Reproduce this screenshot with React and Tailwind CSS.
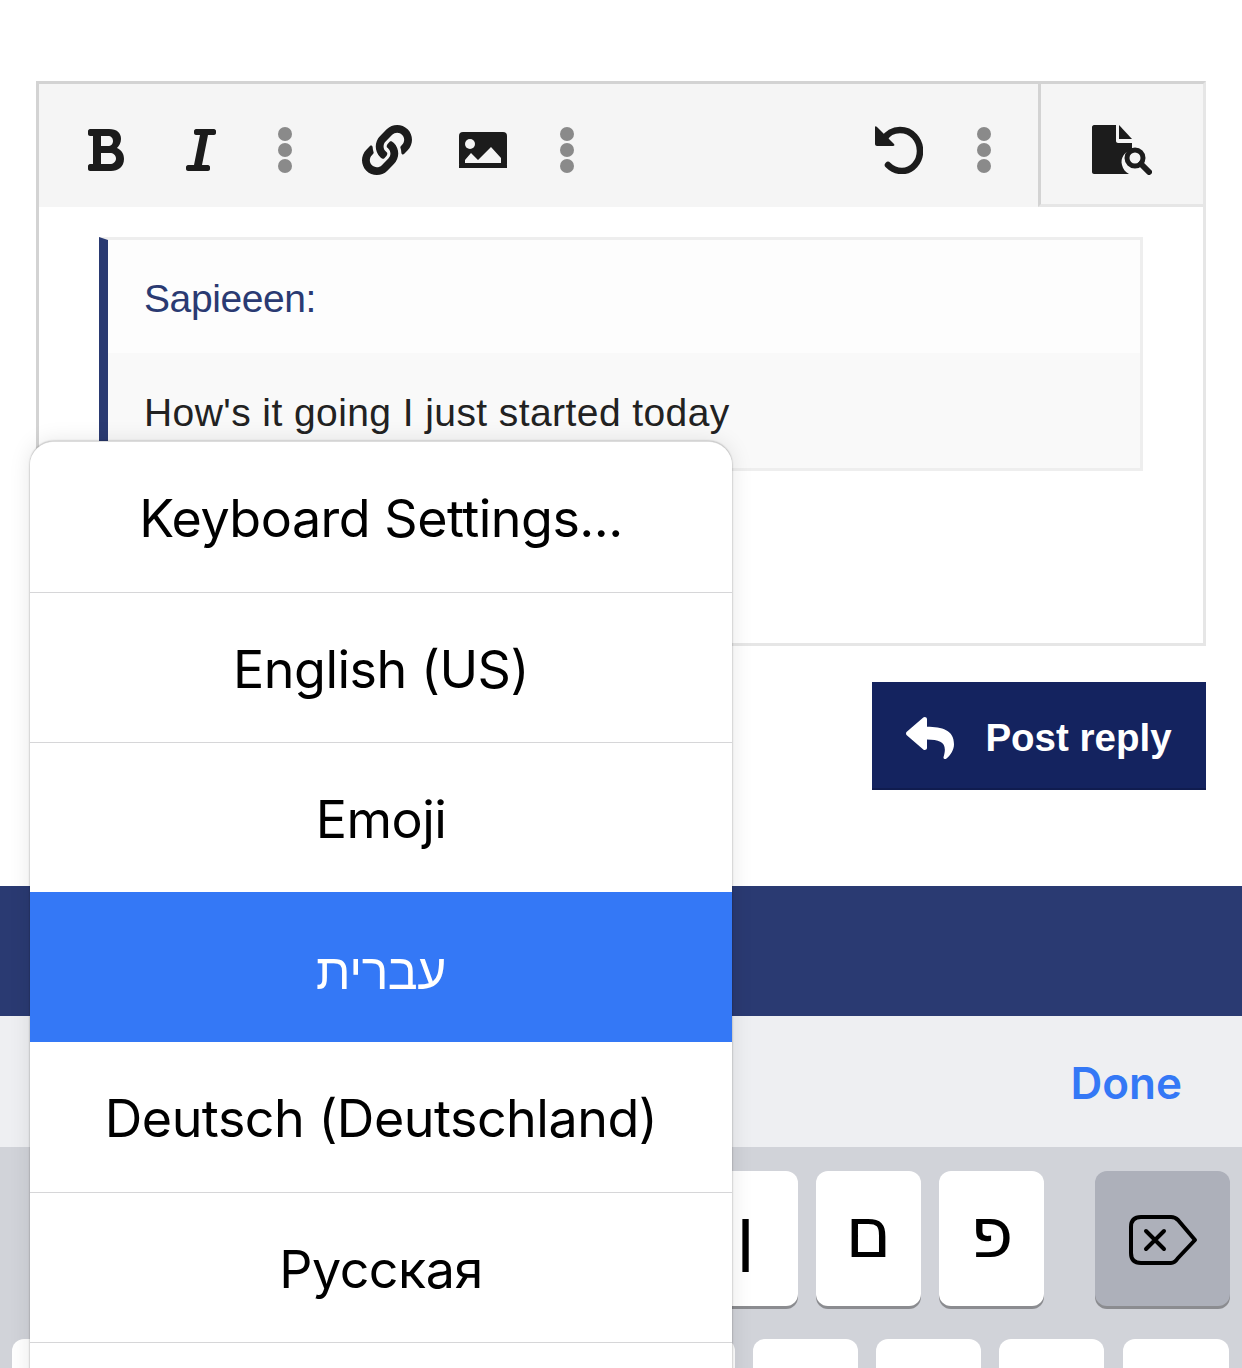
import React from "react";
import { FaLink, FaReply } from "react-icons/fa";

const Dots = ({ className = "" }) => (
  <div className={`flex flex-col items-center gap-[2px] ${className}`}>
    <span className="w-[14px] h-[14px] rounded-full bg-[#8a8a8a]" />
    <span className="w-[14px] h-[14px] rounded-full bg-[#8a8a8a]" />
    <span className="w-[14px] h-[14px] rounded-full bg-[#8a8a8a]" />
  </div>
);

const BoldIcon = () => (
  <svg width="36" height="42" viewBox="0 0 36 42" fill="#1c1c1c" fillRule="evenodd">
    <path d="M2 0h19c8 0 12 4 12 10 0 4-2 7-4 9 4 2 7 5 7 11 0 8-6 12-13 12H2c-1 0-2-1-2-2v-3c0-1 1-2 2-2h3V7H2C1 7 0 6 0 5V2c0-1 1-2 2-2zm11 7v10h7c3 0 5-2 5-5s-2-5-5-5h-7zm0 17v11h9c3 0 6-2 6-5.500S25 24 22 24h-9z" />
  </svg>
);
const ItalicIcon = () => (
  <svg width="30" height="42" viewBox="0 0 30 42" fill="#1c1c1c">
    <path d="M10 0h18c1 0 2 1 2 2v2c0 1-1 2-2 2h-6l-6 30h6c1 0 2 1 2 2v2c0 1-1 2-2 2H2c-1 0-2-1-2-2v-2c0-1 1-2 2-2h6l6-30h-4C9 6 8 5 8 4V2c0-1 1-2 2-2z" />
  </svg>
);
const ImageIcon = () => (
  <svg width="48" height="36" viewBox="0 0 48 36">
    <rect width="48" height="36" rx="4" fill="#1c1c1c" />
    <circle cx="11" cy="12" r="5" fill="#f5f5f5" />
    <path d="M6 34v-3h0V28l6-7 7 7 13-13 10 11v5H6z" fill="#f5f5f5" />
    <rect y="33" width="48" height="3" fill="#1c1c1c" />
  </svg>
);
const UndoIcon = () => (
  <svg width="48" height="48" viewBox="0 0 48 48" fill="none">
    <path d="M13 39c4 4 9 6 14 6 10 0 18-9 18-20S37 4 25 4C18 4 12 8 9 13" stroke="#1c1c1c" strokeWidth="6.500" strokeLinecap="round" />
    <path d="M0 1c0-1 1-1 2 0l17 17c1 1 0 2-1 2H2c-1 0-2-1-2-2V1z" fill="#1c1c1c" />
  </svg>
);
const FileSearchIcon = () => (
  <svg width="60" height="50" viewBox="0 0 60 50">
    <path d="M2 0h22v16c0 1 1 2 2 2h14v7c-7 1-12 8-10 15 1 4 3 7 7 9H2c-1 0-2-1-2-2V2C0 1 1 0 2 0z" fill="#1c1c1c" />
    <path d="M27 0l13 14H27z" fill="#1c1c1c" />
    <circle cx="43" cy="33" r="8" fill="none" stroke="#1c1c1c" strokeWidth="5" />
    <path d="M49 39l8 8" stroke="#1c1c1c" strokeWidth="6" strokeLinecap="round" />
  </svg>
);
const BackspaceIcon = () => (
  <svg width="70" height="50" viewBox="0 0 70 50" fill="none" stroke="#000" strokeWidth="4" strokeLinejoin="round" strokeLinecap="round">
    <path d="M13 2h30c3 0 5 1 7 3l17 20-17 18c-2 3-4 5-7 5H13C6 48 3 44 3 38V12C3 6 6 2 13 2z" />
    <path d="M18 16l18 18M36 16L18 34" />
  </svg>
);

const Key = ({ children, className = "w-[105px]" }) => (
  <div className={`h-[135px] rounded-[12px] bg-white shadow-[0_3px_0_#8b8c90] flex items-center justify-center text-black text-[70px] leading-none font-['DejaVu_Sans',sans-serif] pb-[12px] ${className}`}>
    {children}
  </div>
);

const MenuRow = ({ children, active, line }) => (
  <div className={`h-[150px] flex items-center justify-center leading-none font-['Inter','Liberation_Sans',sans-serif] tracking-[-0.5px] ${active ? "bg-[#3478f6] text-white text-[50px] pt-[8px]" : "bg-white text-black text-[52px] pt-[4px]"} ${line ? "border-t-[1px] border-[#d6d6d8]" : ""}`}>
    {children}
  </div>
);

export default function App() {
  return (
    <div className="relative w-[1242px] h-[1368px] overflow-hidden bg-white font-['Liberation_Sans',Arial,sans-serif]">
      <div className="pt-[81px] px-[36px]">
        <div className="w-[1170px] h-[565px] border-[3px] border-t-[#d3d3d3] border-l-[#d3d3d3] border-r-[#e6e6e6] border-b-[#e6e6e6]">
          <div className="h-[123px] bg-[#f5f5f5] flex">
            <div className="flex-1 flex items-center pl-[49px] pt-[8px]">
              <BoldIcon />
              <div className="ml-[62px]"><ItalicIcon /></div>
              <Dots className="ml-[62px]" />
              <div className="ml-[70px]"><FaLink size={50} color="#1c1c1c" /></div>
              <div className="ml-[47px]"><ImageIcon /></div>
              <Dots className="ml-[53px]" />
              <div className="ml-auto mr-[47px] flex items-center">
                <UndoIcon />
                <Dots className="ml-[54px]" />
              </div>
            </div>
            <div className="w-[165px] shrink-0 border-l-[3px] border-l-[#d3d3d3] border-b-[3px] border-b-[#e6e6e6] flex items-center justify-center pt-[12px]">
              <FileSearchIcon />
            </div>
          </div>
          <div className="pt-[30px] pl-[60px]">
            <div className="w-[1044px] h-[234px] border-l-[9px] border-l-[#2a3a72] border-t-[3px] border-t-[#eeeeee] border-r-[3px] border-r-[#eeeeee] border-b-[3px] border-b-[#eeeeee]">
              <div className="h-[113px] bg-[#fdfdfd] pl-[36px] flex items-center text-[#2a3a72] text-[39px] tracking-[-0.4px] leading-none pt-[4px]">Sapieeen:</div>
              <div className="h-[115px] bg-[#f9f9f9] pl-[36px] flex items-center text-[#222222] text-[39px] tracking-[0.42px] leading-none pt-[4px]">How's it going I just started today</div>
            </div>
          </div>
        </div>
        <div className="flex justify-end mt-[36px]">
          <div className="w-[334px] h-[108px] bg-[#14235f] border-b-[2px] border-[#101c4f] flex items-center justify-center gap-[31px] text-white text-[38.5px] font-bold pt-[6px]">
            <FaReply size={48} color="#fff" />
            <span className="leading-none">Post reply</span>
          </div>
        </div>
      </div>

      <div className="mt-[96px] h-[130px] bg-[#2a3a72]" />
      <div className="h-[131px] bg-[#eeeff2] flex items-center justify-end pr-[60px] pt-[2px]">
        <span className="text-[#3478f6] text-[44px] font-semibold leading-none font-['Inter','Liberation_Sans',sans-serif]">Done</span>
      </div>
      <div className="h-[221px] bg-[#d1d3d9] pt-[24px] flex flex-col gap-[33px]">
        <div className="flex justify-end pr-[12px]">
          <div className="flex gap-[18px]">
            <Key>ן</Key>
            <Key>ם</Key>
            <Key>פ</Key>
          </div>
          <div className="ml-[51px] w-[135px] h-[135px] rounded-[12px] bg-[#adb0ba] shadow-[0_3px_0_#8b8c90] flex items-center justify-center pt-[2px]">
            <BackspaceIcon />
          </div>
        </div>
        <div className="flex justify-end gap-[18px] pr-[13px]">
          <Key className="w-[108px]" />
          <Key />
          <Key />
          <Key />
          <Key />
          <Key />
          <Key />
          <Key />
          <Key />
          <Key className="w-[106px] ml-[1px]" />
        </div>
      </div>

      <div className="absolute left-[30px] top-[441px] w-[702px] rounded-t-[24px] overflow-hidden bg-white border-t-[1px] border-[#dcdcdc] shadow-[0_0_2px_rgba(0,0,0,0.4),0_0_22px_rgba(0,0,0,0.1)]">
        <MenuRow>Keyboard Settings...</MenuRow>
        <MenuRow line>English (US)</MenuRow>
        <MenuRow line>Emoji</MenuRow>
        <MenuRow active>עברית</MenuRow>
        <MenuRow>Deutsch (Deutschland)</MenuRow>
        <MenuRow line>Русская</MenuRow>
        <MenuRow line />
      </div>
    </div>
  );
}
